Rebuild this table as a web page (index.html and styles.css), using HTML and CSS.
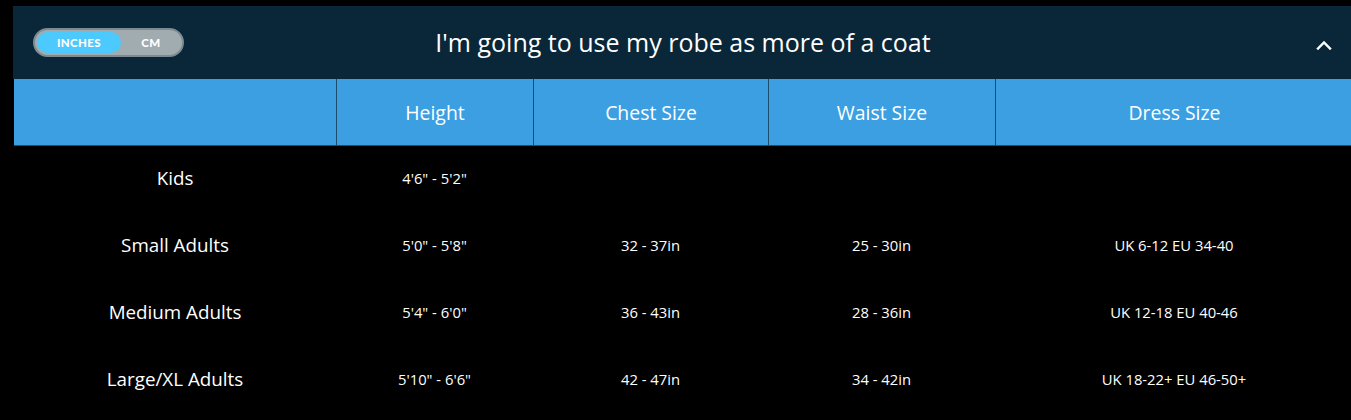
FILE: index.html
```html
<!DOCTYPE html>
<html lang="en">
<head>
<meta charset="utf-8">
<title>Size guide</title>
<link rel="stylesheet" href="styles.css">
</head>
<body>
<div class="wrap">
  <section class="panel">
    <header class="bar">
      <div class="toggle">
        <span class="opt active">INCHES</span>
        <span class="opt">CM</span>
      </div>
      <h1 class="title">I'm going to use my robe as more of a coat</h1>
      <svg class="chev" width="16" height="10" viewBox="0 0 16 10"><path d="M2 8.5 L8 2.5 L14 8.5" fill="none" stroke="#fff" stroke-width="2.4" stroke-linecap="square"/></svg>
    </header>
    <div class="grid">
      <div class="hcell"></div>
      <div class="hcell b">Height</div>
      <div class="hcell b">Chest Size</div>
      <div class="hcell b">Waist Size</div>
      <div class="hcell b">Dress Size</div>

      <div class="label">Kids</div>
      <div class="val">4'6" - 5'2"</div>
      <div class="val"></div>
      <div class="val"></div>
      <div class="val"></div>

      <div class="label">Small Adults</div>
      <div class="val">5'0" - 5'8"</div>
      <div class="val">32 - 37in</div>
      <div class="val">25 - 30in</div>
      <div class="val">UK 6-12 EU 34-40</div>

      <div class="label">Medium Adults</div>
      <div class="val">5'4" - 6'0"</div>
      <div class="val">36 - 43in</div>
      <div class="val">28 - 36in</div>
      <div class="val">UK 12-18 EU 40-46</div>

      <div class="label">Large/XL Adults</div>
      <div class="val">5'10" - 6'6"</div>
      <div class="val">42 - 47in</div>
      <div class="val">34 - 42in</div>
      <div class="val">UK 18-22+ EU 46-50+</div>
    </div>
  </section>
</div>
</body>
</html>
```
FILE: styles.css
```css
html, body {
  margin: 0;
  padding: 0;
  background: #000;
  overflow: hidden;
}
body {
  font-family: "Open Sans", "Liberation Sans", sans-serif;
  color: #fff;
}
.wrap {
  padding: 6px 0 0 13px;
}
.panel {
  width: 1340px;
}
.bar {
  position: relative;
  height: 73px;
  background: #0a2639;
  display: flex;
  align-items: center;
  justify-content: center;
}
.toggle {
  box-sizing: border-box;
  position: absolute;
  left: 20px;
  top: 22px;
  width: 151px;
  height: 29px;
  border: 2px solid #7d8a91;
  border-radius: 15px;
  background: #a1acb1;
  display: flex;
  align-items: center;
  padding: 0 2px;
}
.opt {
  font-family: "Lato", "Open Sans", sans-serif;
  font-weight: 900;
  font-size: 11.5px;
  letter-spacing: 0.4px;
  color: #fff;
  height: 21px;
  line-height: 21px;
  text-align: center;
  border-radius: 11px;
}
.opt.active {
  width: 84px;
  background: #4cc9fd;
}
.opt:not(.active) {
  flex: 1;
  padding-left: 1px;
}
.title {
  margin: 0;
  font-weight: 400;
  font-size: 25px;
  color: #fff;
  letter-spacing: 0;
  padding-bottom: 2px;
}
.chev {
  position: absolute;
  left: 1303px;
  top: 34px;
}
.grid {
  margin-left: 1px;
  display: grid;
  grid-template-columns: 322px 197px 235px 227px 358px;
  grid-auto-rows: 67px;
}
.hcell {
  background: #3b9fe2;
  border-bottom: 1px solid #1c4d6e;
  display: flex;
  align-items: center;
  justify-content: center;
  font-size: 19.4px;
  color: #fff;
  height: 66px;
}
.hcell.b {
  border-left: 1px solid #1c4d6e;
}
.label {
  display: flex;
  align-items: center;
  justify-content: center;
  font-size: 18.8px;
  padding-bottom: 3px;
}
.val {
  display: flex;
  align-items: center;
  justify-content: center;
  font-size: 14.8px;
  padding-bottom: 3px;
}
```
